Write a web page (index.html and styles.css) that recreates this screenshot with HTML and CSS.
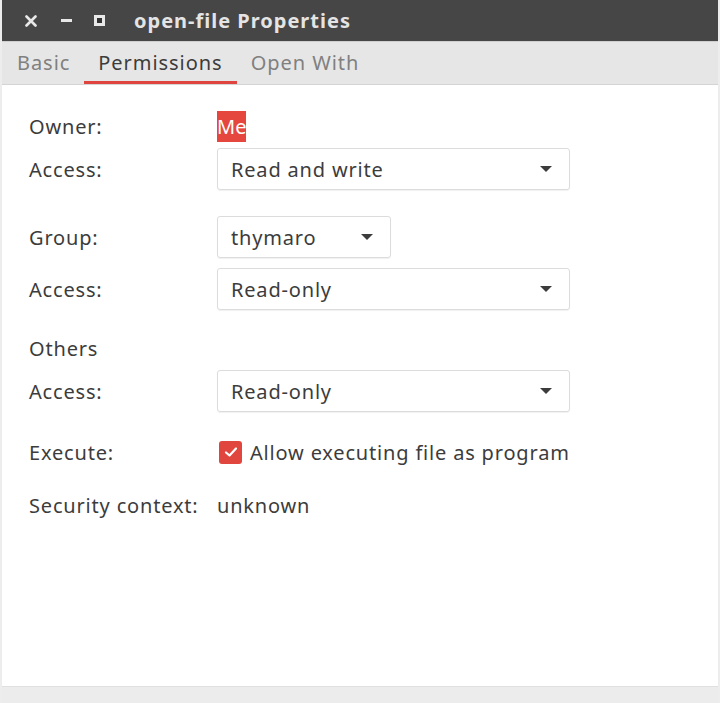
FILE: index.html
```html
<!DOCTYPE html>
<html>
<head>
    <meta charset="UTF-8">
    <meta name="viewport" content="width=device-width, initial-scale=1.0">
    <link rel="stylesheet" href="styles.css">
</head>
<body>
    <div class="window">
        <div class="titlebar">
            <div class="controls">
                <svg class="btn-close" width="12" height="12" viewBox="0 0 12 12">
                    <path d="M1.5 1.5 L10.5 10.5 M10.5 1.5 L1.5 10.5" stroke="#e8e8e8" stroke-width="2.6" stroke-linecap="round"/>
                </svg>
                <span class="btn-min"></span>
                <span class="btn-max"></span>
            </div>
            <div class="title">open-file Properties</div>
        </div>

        <div class="tabs">
            <div class="tab">Basic</div>
            <div class="tab active">Permissions</div>
            <div class="tab">Open With</div>
        </div>

        <div class="content">
            <div class="row row-text">
                <div class="label">Owner:</div>
                <div class="value"><span class="selected">Me</span></div>
            </div>
            <div class="row gap-small">
                <div class="label">Access:</div>
                <div class="combo wide"><span>Read and write</span><i class="arrow"></i></div>
            </div>

            <div class="row gap-big">
                <div class="label">Group:</div>
                <div class="combo narrow"><span>thymaro</span><i class="arrow"></i></div>
            </div>
            <div class="row gap-small">
                <div class="label">Access:</div>
                <div class="combo wide"><span>Read-only</span><i class="arrow"></i></div>
            </div>

            <div class="row row-text gap-big">
                <div class="label">Others</div>
            </div>
            <div class="row gap-small">
                <div class="label">Access:</div>
                <div class="combo wide"><span>Read-only</span><i class="arrow"></i></div>
            </div>

            <div class="row row-text gap-check">
                <div class="label">Execute:</div>
                <div class="value check-wrap">
                    <span class="checkbox">
                        <svg width="14" height="12" viewBox="0 0 14 12">
                            <path d="M2 6.5 L5.5 9.5 L12 2.5" fill="none" stroke="#fff" stroke-width="2.2" stroke-linecap="round" stroke-linejoin="round"/>
                        </svg>
                    </span>
                    Allow executing file as program
                </div>
            </div>

            <div class="row row-text gap-sec">
                <div class="label">Security context:</div>
                <div class="value">unknown</div>
            </div>
        </div>

        <div class="footer"></div>
    </div>
</body>
</html>
```

FILE: styles.css
```css
* {
    margin: 0;
    padding: 0;
    box-sizing: border-box;
}

body {
    width: 720px;
    height: 703px;
    overflow: hidden;
    font-family: 'Noto Sans', 'Open Sans', sans-serif;
    color: #3c3c3c;
    background: #fff;
}

.window {
    display: flex;
    flex-direction: column;
    height: 703px;
    border-left: 2px solid #ededed;
    border-right: 2px solid #ededed;
}

.titlebar {
    height: 42px;
    background: #464646;
    border-bottom: 1px solid #cfcfcf;
    display: flex;
    align-items: center;
    color: #e4e4e4;
}

.controls {
    display: flex;
    align-items: center;
    width: 132px;
    padding-left: 23px;
}

.btn-close {
    margin-right: 24px;
}

.btn-min {
    width: 11px;
    height: 3px;
    background: #e8e8e8;
    margin-right: 22px;
}

.btn-max {
    width: 11px;
    height: 11px;
    border: 3px solid #e8e8e8;
    background: #333;
}

.title {
    font-size: 20px;
    font-weight: bold;
    letter-spacing: 1px;
}

.tabs {
    height: 43px;
    background: #e6e6e6;
    border-bottom: 1px solid #d4d4d4;
    display: flex;
    align-items: stretch;
    padding-left: 1px;
}

.tab {
    font-size: 20px;
    letter-spacing: 0.95px;
    color: #808080;
    padding: 0 14px;
    display: flex;
    align-items: center;
    border-bottom: 3px solid transparent;
    padding-top: 2px;
}

.tab.active {
    color: #3c3c3c;
    border-bottom-color: #e0443e;
}

.content {
    flex: 1;
    padding: 29px 0 0 27px;
}

.row {
    display: flex;
    align-items: center;
    height: 42px;
    font-size: 20px;
    letter-spacing: 0.82px;
}

.row-text {
    height: 24px;
}

.gap-small {
    margin-top: 10px;
}

.gap-big {
    margin-top: 26px;
}

.gap-check {
    margin-top: 28px;
}

.gap-sec {
    margin-top: 29px;
}

.label {
    width: 188px;
    flex-shrink: 0;
    white-space: nowrap;
}

.selected {
    background: #e5473e;
    color: #fff;
    padding: 2px 0;
    letter-spacing: 0;
}

.combo {
    height: 42px;
    border: 1px solid #dcdcdc;
    border-radius: 3px;
    box-shadow: 0 1px 1px rgba(0, 0, 0, 0.06);
    display: flex;
    align-items: center;
    justify-content: space-between;
    padding: 0 17px 0 13px;
}

.combo.wide {
    width: 353px;
}

.combo.narrow {
    width: 174px;
}

.arrow {
    width: 0;
    height: 0;
    border-left: 6px solid transparent;
    border-right: 6px solid transparent;
    border-top: 6px solid #3c3c3c;
}

.check-wrap {
    display: flex;
    align-items: center;
    white-space: nowrap;
}

.checkbox {
    width: 23px;
    height: 23px;
    border-radius: 3px;
    background: #e0463d;
    display: flex;
    align-items: center;
    justify-content: center;
    margin: 0 8px 0 2px;
}

.footer {
    height: 17px;
    background: #ececec;
    border-top: 1px solid #e0e0e0;
}
```
